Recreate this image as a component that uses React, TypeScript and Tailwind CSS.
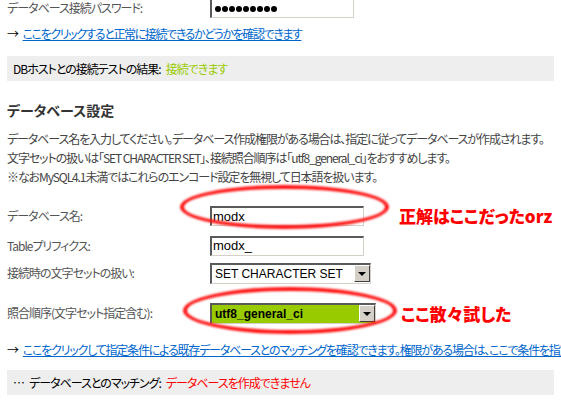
import type { ReactNode } from 'react';

const jp = "font-['Noto_Sans_CJK_JP','Noto_Sans',sans-serif] [font-feature-settings:'palt']";
const latin = "font-['Liberation_Sans',Arial,sans-serif]";

function Field({ label, children }: { label: string; children: ReactNode }) {
  return (
    <div className="flex items-center">
      <div className="w-[203px] shrink-0 text-[12px] leading-[16px] tracking-[-1px] text-[#555]">{label}</div>
      {children}
    </div>
  );
}

function TextBox({ value, width }: { value?: string; width: string }) {
  return (
    <div
      className={`${width} h-[20px] flex items-center bg-white border-t-2 border-l-2 border-b border-r border-t-[#5a5a5a] border-l-[#5a5a5a] border-b-[#d4d0c8] border-r-[#d4d0c8] pl-[1px] ${latin} text-[13px] text-black`}
    >
      {value}
    </div>
  );
}

function SelectBox({ value, width, green }: { value: string; width: string; green?: boolean }) {
  return (
    <div
      className={`${width} h-[21px] flex items-center justify-between border-t-2 border-l-2 border-b border-r border-t-[#5a5a5a] border-l-[#5a5a5a] border-b-[#d4d0c8] border-r-[#d4d0c8] ${
        green ? 'bg-[#99cc00] font-bold text-[12px]' : 'bg-white text-[12px]'
      } ${latin} text-black`}
    >
      <span className="pl-[3px] whitespace-nowrap">{value}</span>
      <span className="w-[16px] h-[17px] flex items-center justify-center bg-[#d4d0c8] border border-t-white border-l-white border-b-[#404040] border-r-[#404040]">
        <span className="w-0 h-0 border-l-[4px] border-r-[4px] border-t-[4px] border-l-transparent border-r-transparent border-t-black" />
      </span>
    </div>
  );
}

function Ring({ className }: { className: string }) {
  return (
    <div
      className={`absolute rounded-[50%] border-[4px] border-[#ff1010] blur-[0.8px] pointer-events-none ${className}`}
    />
  );
}

export default function App() {
  return (
    <div className={`relative w-[561px] h-[407px] overflow-hidden bg-white ${jp}`}>
      <div className="px-[7px]">
        {/* password row, cut off at the top */}
        <div className="mt-[-2px]">
          <Field label="データベース接続パスワード:">
            <div className="w-[144px] h-[20px] flex items-center gap-[1px] pl-[3px] bg-white border-t-2 border-l-2 border-b border-r border-t-[#5a5a5a] border-l-[#5a5a5a] border-b-[#d4d0c8] border-r-[#d4d0c8]">
              {Array.from({ length: 9 }).map((_, i) => (
                <span key={i} className="w-[6px] h-[6px] rounded-full bg-black" />
              ))}
            </div>
          </Field>
        </div>

        <p className="mt-[8px] text-[12px] leading-[16px] tracking-[-1.4px] whitespace-nowrap">
          <span className="mr-[5px] text-black">→</span>
          <span className="text-[#0066cc] underline">ここをクリックすると正常に接続できるかどうかを確認できます</span>
        </p>

        <div className="mt-[14px] h-[25px] flex items-center px-[6px] bg-[#eeeeee] text-[12px] tracking-[-1px] whitespace-nowrap">
          <span className="text-black">DBホストとの接続テストの結果:</span>
          <span className="ml-[5px] text-[#99cc00]">接続できます</span>
        </div>

        <h2 className="mt-[20px] text-[14px] leading-[18px] font-bold text-[#333]">データベース設定</h2>

        <div className="mt-[10px] text-[12px] leading-[19px] tracking-[-1.1px] text-[#444] whitespace-nowrap">
          <p>データベース名を入力してください。データベース作成権限がある場合は、指定に従ってデータベースが作成されます。</p>
          <p>文字セットの扱いは「SET CHARACTER SET」、接続照合順序は「utf8_general_ci」をおすすめします。</p>
          <p>※なおMySQL4.1未満ではこれらのエンコード設定を無視して日本語を扱います。</p>
        </div>

        <div className="mt-[17px] flex flex-col gap-[7px]">
          <Field label="データベース名:">
            <TextBox value="modx" width="w-[154px]" />
            <span className="ml-[35px] text-[17px] font-black text-[#ff0000] whitespace-nowrap">正解はここだったorz</span>
          </Field>
          <Field label="Tableプリフィクス:">
            <TextBox value="modx_" width="w-[154px]" />
          </Field>
          <Field label="接続時の文字セットの扱い:">
            <SelectBox value="SET CHARACTER SET" width="w-[161px]" />
          </Field>
        </div>

        <div className="mt-[17px]">
          <Field label="照合順序(文字セット指定含む):">
            <SelectBox value="utf8_general_ci" width="w-[166px]" green />
            <span className="ml-[25px] text-[17px] font-black text-[#ff0000] whitespace-nowrap">ここ散々試した</span>
          </Field>
        </div>

        <p className="mt-[16px] text-[12px] leading-[16px] tracking-[-1.2px] whitespace-nowrap">
          <span className="mr-[5px] text-black">→</span>
          <span className="text-[#0066cc] underline">
            ここをクリックして指定条件による既存データベースとのマッチングを確認できます。権限がある場合は、ここで条件を指定したデータベースを作成します。
          </span>
        </p>

        <div className="mt-[12px] h-[25px] flex items-center px-[6px] bg-[#eeeeee] text-[12px] tracking-[-1px] whitespace-nowrap">
          <span className="mr-[5px] text-black">…</span>
          <span className="text-black">データベースとのマッチング:</span>
          <span className="ml-[5px] text-[#ff0000]">データベースを作成できません</span>
        </div>
      </div>

      {/* hand-drawn annotation rings */}
      <Ring className="left-[180px] top-[185px] w-[209px] h-[44px]" />
      <Ring className="left-[183px] top-[287px] w-[214px] h-[47px]" />
    </div>
  );
}
